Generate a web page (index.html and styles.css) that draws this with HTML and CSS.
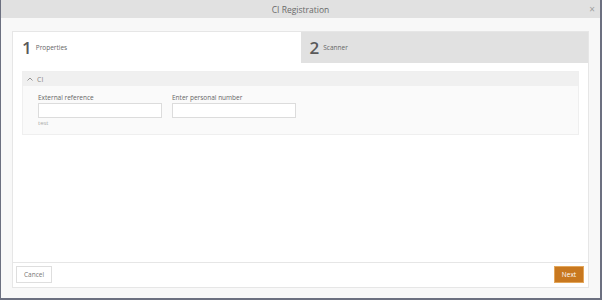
FILE: index.html
```html
<!DOCTYPE html>
<html>
<head>
<meta charset="utf-8">
<link rel="stylesheet" href="styles.css">
</head>
<body>
<div class="frame">
  <div class="titlebar">
    <span class="title">CI Registration</span>
    <span class="close">×</span>
  </div>
  <div class="dialog-body">
    <div class="panel">
      <div class="tabs">
        <div class="tab active"><span class="num">1</span><span class="tab-label">Properties</span></div>
        <div class="tab"><span class="num">2</span><span class="tab-label">Scanner</span></div>
      </div>
      <div class="content">
        <div class="section">
          <div class="section-head">
            <svg class="chev" width="6" height="4" viewBox="0 0 6 4"><path d="M0.5 3.5 L3 1 L5.5 3.5" fill="none" stroke="#888" stroke-width="0.9"/></svg>
            <span>CI</span>
          </div>
          <div class="section-body">
            <div class="field">
              <label class="label">External reference</label>
              <div class="input"></div>
              <div class="hint">test</div>
            </div>
            <div class="field">
              <label class="label">Enter personal number</label>
              <div class="input"></div>
            </div>
          </div>
        </div>
      </div>
      <div class="footer">
        <button class="btn cancel">Cancel</button>
        <button class="btn next">Next</button>
      </div>
    </div>
  </div>
</div>
</body>
</html>
```

FILE: styles.css
```css
html, body {
  margin: 0;
  padding: 0;
  width: 602px;
  height: 300px;
  overflow: hidden;
  font-family: "Open Sans", "Noto Sans", sans-serif;
}
.frame {
  box-sizing: border-box;
  width: 602px;
  height: 300px;
  border-left: 1px solid #6c7080;
  border-right: 2px solid #6c7080;
  border-bottom: 2px solid #6c7080;
  background: #f8f8f8;
  display: flex;
  flex-direction: column;
}
.titlebar {
  height: 18px;
  background: #e1e1e1;
  display: flex;
  align-items: center;
  justify-content: center;
  position: relative;
  flex: none;
}
.title {
  font-size: 8.5px;
  color: #6a6a6a;
}
.close {
  position: absolute;
  right: 5px;
  top: 3px;
  font-size: 10px;
  line-height: 12px;
  color: #a0a0a0;
}
.dialog-body {
  flex: 1;
  display: flex;
  padding: 13px 11px 10px 11px;
  min-height: 0;
}
.panel {
  flex: 1;
  background: #fff;
  border: 1px solid #e6e6e6;
  display: flex;
  flex-direction: column;
}
.tabs {
  display: flex;
  height: 31px;
  flex: none;
}
.tab {
  flex: 1;
  display: flex;
  align-items: center;
  padding-left: 9px;
  background: #e1e1e1;
  color: #555;
}
.tab.active {
  background: #fff;
}
.num {
  font-size: 17px;
  font-weight: 600;
  color: #5a5a5a;
  line-height: 1;
  margin-right: 4px;
}
.tab-label {
  font-size: 6.5px;
  color: #666;
}
.content {
  flex: 1;
  padding: 8px 9px;
}
.section {
  background: #fafafa;
  border: 1px solid #efefef;
}
.section-head {
  height: 14px;
  background: #f0f0f0;
  display: flex;
  align-items: center;
  padding-left: 4px;
  font-size: 7px;
  color: #888;
}
.chev {
  margin-right: 4px;
}
.section-body {
  display: flex;
  gap: 10px;
  padding: 7px 15px 7px 15px;
}
.field {
  width: 124px;
  display: flex;
  flex-direction: column;
}
.label {
  font-size: 6.5px;
  color: #666;
  line-height: 9px;
  margin-bottom: 1px;
}
.input {
  height: 13px;
  background: #fff;
  border: 1px solid #dcdcdc;
}
.hint {
  font-size: 6px;
  color: #aaa;
  line-height: 8px;
  margin-top: 1px;
}
.footer {
  flex: none;
  border-top: 1px solid #e6e6e6;
  display: flex;
  justify-content: space-between;
  align-items: center;
  padding: 3px 4px 4px 3px;
}
.btn {
  font-family: "Open Sans", "Noto Sans", sans-serif;
  font-size: 6.5px;
  height: 17px;
  padding: 0 6px;
  margin: 0;
}
.cancel {
  background: #fff;
  border: 1px solid #dedede;
  color: #777;
  width: 36px;
}
.next {
  background: #c8781f;
  border: 1px solid #e3a65a;
  color: #fff;
  width: 30px;
}
```
